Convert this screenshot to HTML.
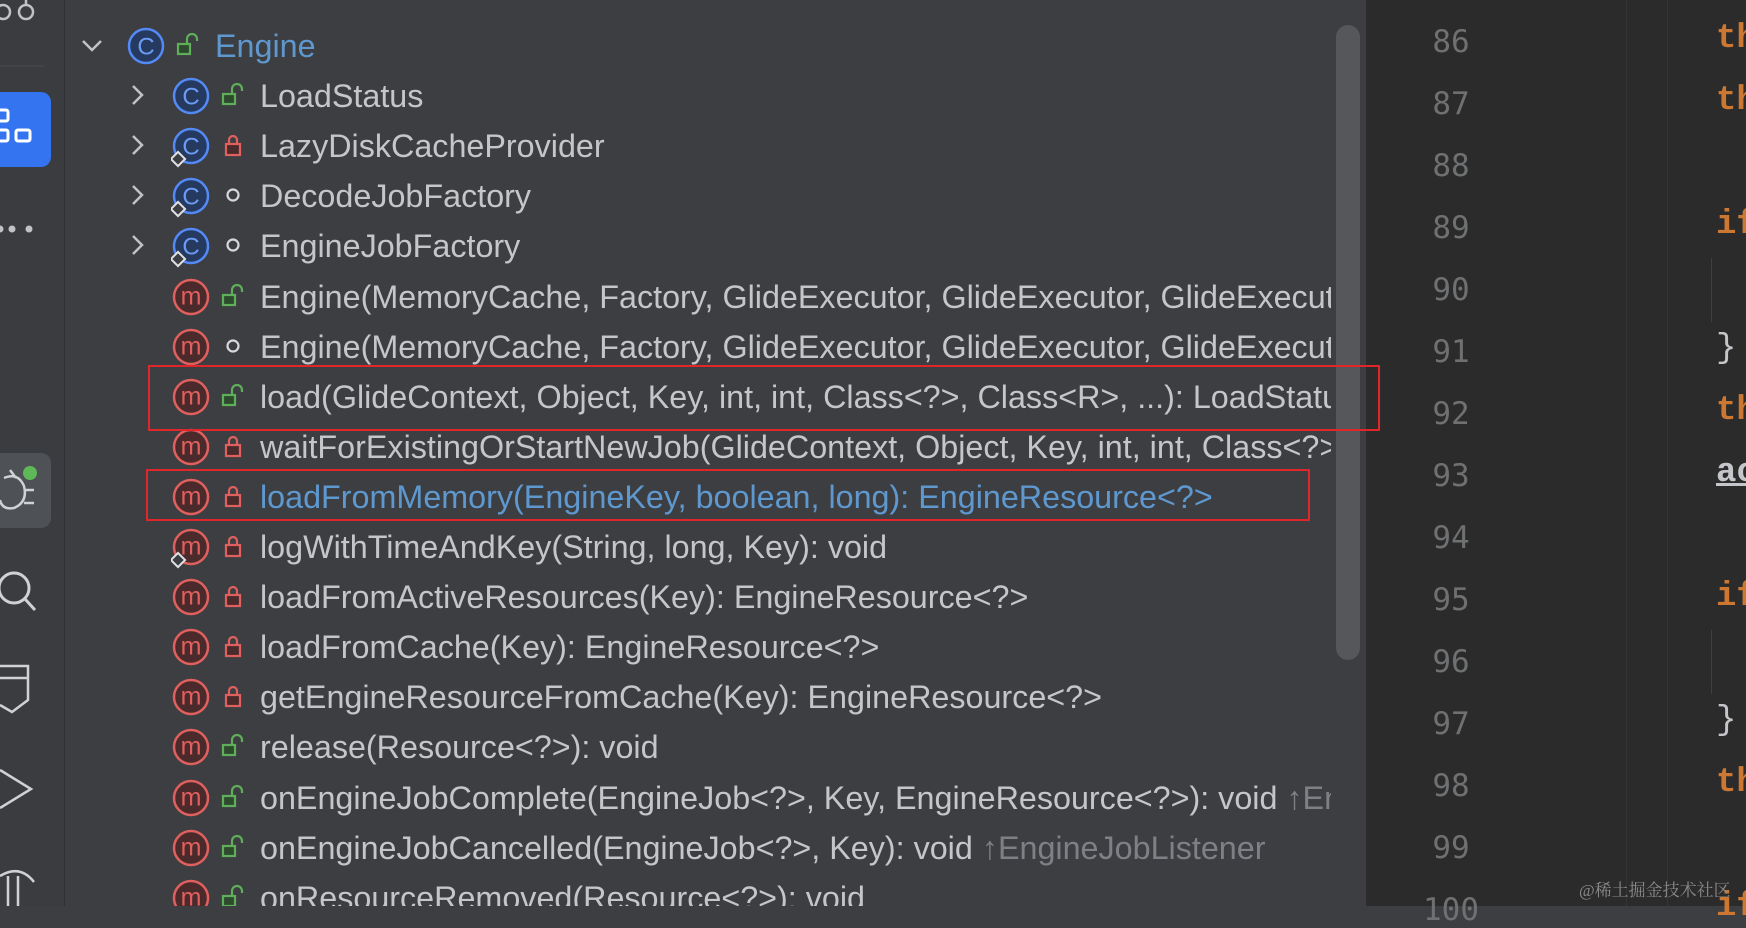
<!DOCTYPE html>
<html><head><meta charset="utf-8"><style>
*{margin:0;padding:0;box-sizing:border-box}
body{width:1746px;height:906px;overflow:hidden;background:#3c3e41;position:relative;font-family:"Liberation Sans",sans-serif}
#side{position:absolute;left:0;top:0;width:65px;height:906px;background:#3a3c3f;border-right:1px solid #2f3133}
#panel{position:absolute;left:66px;top:0;width:1300px;height:906px;overflow:hidden}
.row{position:absolute;left:0;height:50px;width:1300px}
.row .t{position:absolute;top:0;line-height:50px;font-size:32.3px;color:#c4c6ca;white-space:nowrap;width:1071px;overflow:hidden}
.row svg{position:absolute}
.box{position:absolute;border:2.5px solid #e1262b;z-index:5}
#ed{position:absolute;left:1366px;top:0;width:380px;height:906px;background:#2b2b2b}
.ln{position:absolute;left:45px;width:80px;text-align:center;font-family:"DejaVu Sans Mono",monospace;font-size:31px;color:#6e7072}
.cd{position:absolute;left:350px;font-family:"Liberation Mono",monospace;font-size:34px;font-weight:bold;color:#cc7832}
</style></head><body>
<div id="side">
  <svg style="position:absolute;left:0;top:0" width="65" height="906">
    <circle cx="3" cy="12" r="7" fill="none" stroke="#c0c2c6" stroke-width="2.5"/>
    <circle cx="26" cy="12" r="7" fill="none" stroke="#c0c2c6" stroke-width="2.5"/>
    <line x1="26" y1="0" x2="26" y2="5" stroke="#c0c2c6" stroke-width="2.5"/>
    <line x1="0" y1="66" x2="44" y2="66" stroke="#4a4c4f" stroke-width="1"/>
    <rect x="-12" y="92" width="63" height="75" rx="10" fill="#3574f0"/>
    <rect x="-4" y="110" width="12" height="11" rx="2" fill="none" stroke="#fff" stroke-width="3"/>
    <rect x="-4" y="130" width="12" height="11" rx="2" fill="none" stroke="#fff" stroke-width="3"/>
    <rect x="16" y="130" width="14" height="11" rx="2" fill="none" stroke="#fff" stroke-width="3"/>
    <circle cx="0" cy="229" r="3.5" fill="#c0c2c6"/><circle cx="12" cy="229" r="3.5" fill="#c0c2c6"/><circle cx="29" cy="229" r="3.5" fill="#c0c2c6"/>
    <rect x="-12" y="453" width="63" height="75" rx="10" fill="#4e5155"/>
    <path d="M4 478 q14 -6 20 8 q4 16 -10 22 q-12 2 -14 -8 M24 490 h10 M24 503 h10 M10 470 l6 8" fill="none" stroke="#cfd1d4" stroke-width="2.5"/>
    <circle cx="30" cy="473" r="7" fill="#5fb857"/>
    <circle cx="14" cy="588" r="15" fill="none" stroke="#cfd1d4" stroke-width="3"/>
    <line x1="25" y1="599" x2="35" y2="610" stroke="#cfd1d4" stroke-width="3"/>
    <path d="M0 666 H28 V700 L12 712 L0 705 M0 678 H28" fill="none" stroke="#cfd1d4" stroke-width="2.5"/>
    <path d="M0 770 L31 789 L0 808" fill="none" stroke="#cfd1d4" stroke-width="2.5"/>
    <path d="M0 876 q20 -12 34 6 M8 876 V906 M18 876 V906" fill="none" stroke="#cfd1d4" stroke-width="2.5"/>
  </svg>
</div>
<div id="panel"></div>
<div class="box" style="left:148px;top:365px;width:1232px;height:66px"></div>
<div class="box" style="left:146px;top:469px;width:1164px;height:52px"></div>
<div style="position:absolute;left:1336px;top:25px;width:24px;height:635px;border-radius:12px;background:#55575a"></div>
<div id="ed">
  <div style="position:absolute;left:260px;top:0;width:1px;height:906px;background:#353535"></div>
  <div style="position:absolute;left:301px;top:0;width:1px;height:906px;background:#353535"></div>
  <div style="position:absolute;left:345px;top:258px;width:1px;height:64px;background:#3f3f3f"></div>
  <div style="position:absolute;left:345px;top:630px;width:1px;height:64px;background:#3f3f3f"></div>
  <div id="lns"></div>
  <div style="position:absolute;left:213px;top:876px;font-size:17px;color:#8a8a8a;font-family:'Liberation Serif','Noto Serif CJK SC',serif;white-space:nowrap">@稀土掘金技术社区</div>
</div>
<script>
const P=document.getElementById('panel');
const G='#5fae5a',R='#e0605f';
function cIcon(x,y,d){return `<svg style="left:${x-20}px;top:${y-22}px" width="44" height="44"><circle cx="20" cy="22" r="17" fill="#253a5e" stroke="#548af7" stroke-width="2.5"/><text x="20" y="30.5" font-size="24" text-anchor="middle" fill="#6c9bf7" font-family="Liberation Sans">C</text>${d?'<rect x="2" y="30" width="10" height="10" transform="rotate(45 7 35)" fill="#3c3e41" stroke="#dfe1e5" stroke-width="2"/>':''}</svg>`}
function mIcon(x,y,d){return `<svg style="left:${x-20}px;top:${y-22}px" width="44" height="44"><circle cx="20" cy="22" r="17" fill="#4a2a2a" stroke="${R}" stroke-width="2.5"/><text x="20" y="29.5" font-size="25" text-anchor="middle" fill="${R}" font-family="Liberation Sans">m</text>${d?'<rect x="2" y="30" width="10" height="10" transform="rotate(45 7 35)" fill="#3c3e41" stroke="#dfe1e5" stroke-width="2"/>':''}</svg>`}
function acc(x,y,k){
 if(k=='g')return `<svg style="left:${x-12}px;top:${y-14}px" width="26" height="28"><rect x="2" y="12" width="12" height="10" fill="#2d4a2d" stroke="${G}" stroke-width="2.2"/><path d="M11 12 V7 a5 5 0 0 1 10 0 V9" fill="none" stroke="${G}" stroke-width="2.2"/></svg>`;
 if(k=='r')return `<svg style="left:${x-12}px;top:${y-14}px" width="26" height="28"><rect x="5" y="12" width="14" height="11" fill="#4a2a2a" stroke="${R}" stroke-width="2.2"/><path d="M8 12 V8 a4 4 0 0 1 8 0 V12" fill="none" stroke="${R}" stroke-width="2.2"/></svg>`;
 return `<svg style="left:${x-12}px;top:${y-14}px" width="26" height="28"><circle cx="12" cy="13" r="5.5" fill="none" stroke="#d6d8dc" stroke-width="2.2"/></svg>`;
}
const rows=[
['Engine','C','g',0,0,'#5e98cf'],
['LoadStatus','C','g',1,0],
['LazyDiskCacheProvider','C','r',1,1],
['DecodeJobFactory','C','o',1,1],
['EngineJobFactory','C','o',1,1],
['Engine(MemoryCache, Factory, GlideExecutor, GlideExecutor, GlideExecutor, GlideExecutor)','m','g',2,0],
['Engine(MemoryCache, Factory, GlideExecutor, GlideExecutor, GlideExecutor, GlideExecutor)','m','o',2,0],
['load(GlideContext, Object, Key, int, int, Class&lt;?&gt;, Class&lt;R&gt;, ...): LoadStatus','m','g',2,0],
['waitForExistingOrStartNewJob(GlideContext, Object, Key, int, int, Class&lt;?&gt;','m','r',2,0],
['loadFromMemory(EngineKey, boolean, long): EngineResource&lt;?&gt;','m','r',2,0,'#5e98cf'],
['logWithTimeAndKey(String, long, Key): void','m','r',2,1],
['loadFromActiveResources(Key): EngineResource&lt;?&gt;','m','r',2,0],
['loadFromCache(Key): EngineResource&lt;?&gt;','m','r',2,0],
['getEngineResourceFromCache(Key): EngineResource&lt;?&gt;','m','r',2,0],
['release(Resource&lt;?&gt;): void','m','g',2,0],
['onEngineJobComplete(EngineJob&lt;?&gt;, Key, EngineResource&lt;?&gt;): void <span style="color:#7e8085">↑EngineJobListener</span>','m','g',2,0],
['onEngineJobCancelled(EngineJob&lt;?&gt;, Key): void <span style="color:#7e8085">↑EngineJobListener</span>','m','g',2,0],
['onResourceRemoved(Resource&lt;?&gt;): void','m','g',2,0]];
let h='';
rows.forEach((r,i)=>{
 const cy=46+50.1*i;const top=cy-25;
 const off=r[3]==0?-45:0;
 let s=`<div class="row" style="top:${top}px">`;
 const c=25;
 if(r[3]==0)s+=`<svg style="left:14px;top:${c-12}px" width="24" height="24"><path d="M3 7 L12 16 L21 7" fill="none" stroke="#c0c2c6" stroke-width="2.5"/></svg>`;
 if(r[3]==1)s+=`<svg style="left:60px;top:${c-12}px" width="24" height="24"><path d="M7 2 L16 11 L7 20" fill="none" stroke="#c0c2c6" stroke-width="2.5"/></svg>`;
 s+=(r[1]=='C'?cIcon(125+off,c,r[4]):mIcon(125+off,c,r[4]));
 s+=acc(167+off,c,r[2]);
 s+=`<div class="t" style="left:${194+off}px;${r[5]?'color:'+r[5]:''}">${r[0]}</div></div>`;
 h+=s;
});
P.innerHTML=h;
let l='';
const code={86:'th',87:'th',89:'if',91:'}',92:'th',93:'ac',95:'if',97:'}',98:'th',100:'if'};
for(let n=86;n<=100;n++){const y=41+62*(n-86);
 l+=`<div class="ln" style="top:${y-17}px">${n}</div>`;
 if(code[n])l+=`<div class="cd" style="top:${y-21}px;${n==93?'color:#c4c6ca;text-decoration:underline;':''}${code[n]=='}'?'color:#c4c6ca;font-weight:normal;':''}">${code[n]}</div>`;
}
document.getElementById('lns').innerHTML=l;
</script>
</body></html>
